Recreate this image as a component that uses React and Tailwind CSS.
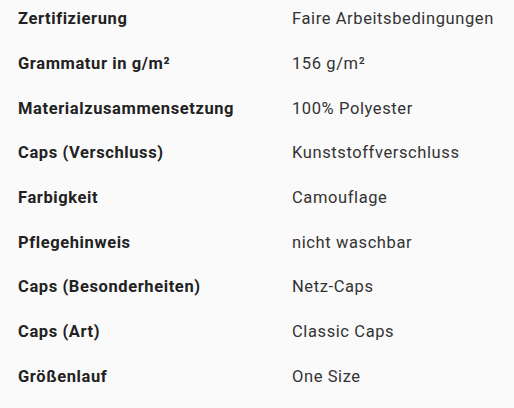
const ROWS = [
  ["Zertifizierung", "Faire Arbeitsbedingungen"],
  ["Grammatur in g/m²", "156 g/m²"],
  ["Materialzusammensetzung", "100% Polyester"],
  ["Caps (Verschluss)", "Kunststoffverschluss"],
  ["Farbigkeit", "Camouflage"],
  ["Pflegehinweis", "nicht waschbar"],
  ["Caps (Besonderheiten)", "Netz-Caps"],
  ["Caps (Art)", "Classic Caps"],
  ["Größenlauf", "One Size"],
];

export default function App() {
  return (
    <div className="h-[408px] w-[514px] overflow-hidden bg-[#fafafa] font-['Roboto',sans-serif] text-[16.5px] leading-6 tracking-[0.6px]">
      <div className="-mt-[3px]">
        {ROWS.map(([label, value]) => (
          <div key={label} className="flex h-[44.66px] items-center">
            <div className="w-[292px] pl-[18px] font-bold text-[#222]">{label}</div>
            <div className="text-[#333]">{value}</div>
          </div>
        ))}
      </div>
    </div>
  );
}
